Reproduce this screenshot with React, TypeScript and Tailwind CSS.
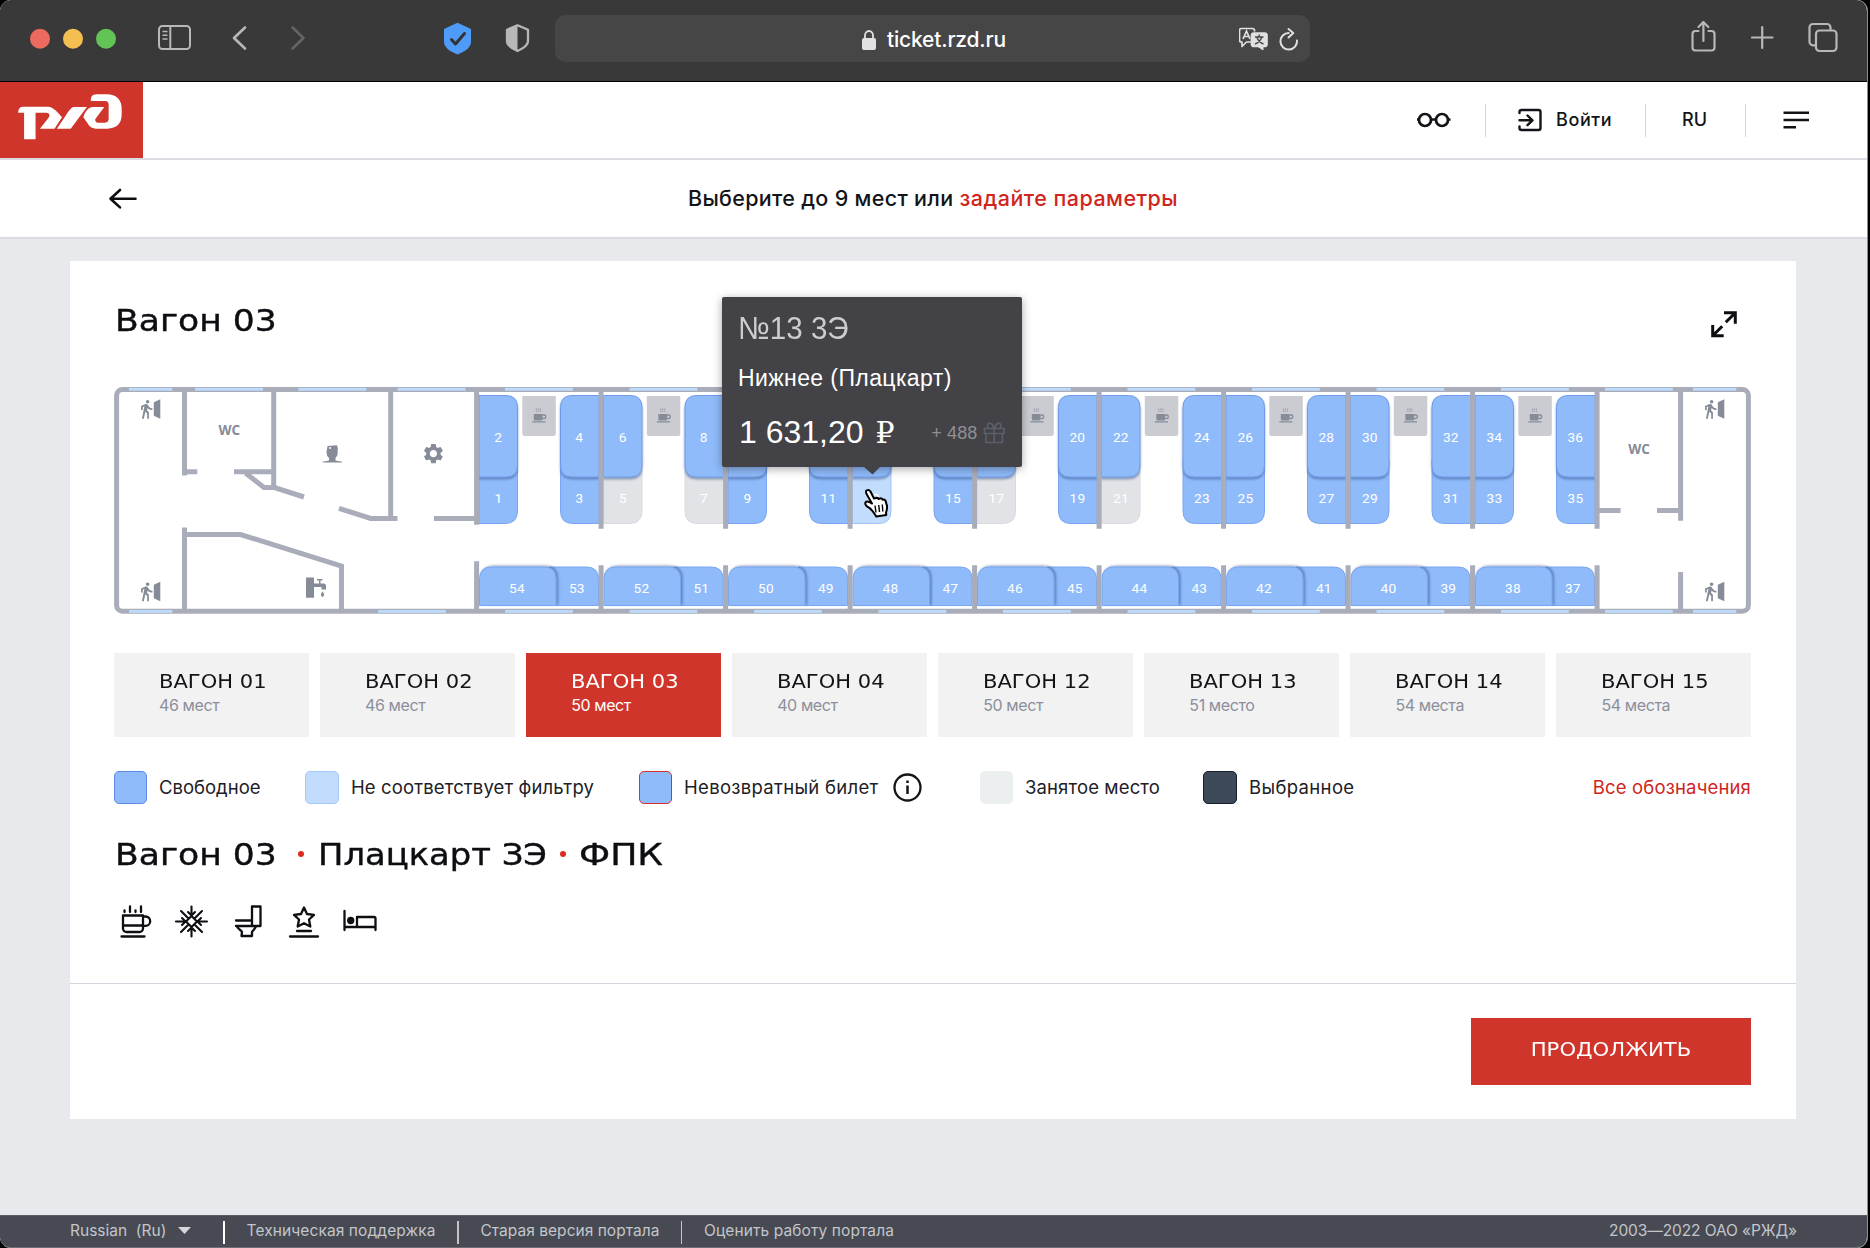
import React from "react";
import { MdSettings, MdDirectionsWalk } from "react-icons/md";

const WALL = "#a9adb9";
const GLASS = "#bedbfb";
const GLYPH = "#868b98";
const FREE = "#8fbbfa";
const PITCH = 124.5;

const compartments = [0, 1, 2, 3, 4, 5, 6, 7, 8];
const occupied = [5, 7, 17, 21];
const hovered = 13;
// Upper berths whose labels lie beneath the open seat tooltip.
const covered = [10, 12, 14, 16, 18];

const wagons = [
  { name: "ВАГОН 01", seats: "46 мест" },
  { name: "ВАГОН 02", seats: "46 мест" },
  { name: "ВАГОН 03", seats: "50 мест", active: true },
  { name: "ВАГОН 04", seats: "40 мест" },
  { name: "ВАГОН 12", seats: "50 мест" },
  { name: "ВАГОН 13", seats: "51 место" },
  { name: "ВАГОН 14", seats: "54 места" },
  { name: "ВАГОН 15", seats: "54 места" },
];

function BrowserBar() {
  return (
    <div className="flex h-[82px] w-full shrink-0 items-start rounded-t-[10px] border-b border-black bg-[#393939]">
      <svg className="ml-[29px]" width="88" height="81" viewBox="29 0 88 81">
        <circle cx="40" cy="38.7" r="10" fill="#ec6a5f" />
        <circle cx="73" cy="38.7" r="10" fill="#f4bf50" />
        <circle cx="106" cy="38.7" r="10" fill="#61c455" />
      </svg>
      <svg className="ml-[40px]" width="38" height="81" viewBox="157 0 38 81" fill="none" stroke="#b8b8b8" strokeWidth="2">
        <rect x="159" y="26" width="31" height="23" rx="3.5" />
        <path d="M170.3 26v23" />
        <path d="M162.5 31.5h5M162.5 35.2h5M162.5 39h5" strokeWidth="1.6" />
      </svg>
      <svg className="ml-[35px]" width="80" height="81" viewBox="230 0 80 81" fill="none" strokeWidth="2.6" strokeLinecap="round" strokeLinejoin="round">
        <path d="M245 27.5L234 38l11 10.5" stroke="#b8b8b8" />
        <path d="M292.5 27.5L303.5 38l-11 10.5" stroke="#646464" />
      </svg>
      <svg className="ml-[130px]" width="94" height="81" viewBox="440 0 94 81">
        <path d="M457.5 22.800L471 29v13c0 5.500-6 9.500-13.500 12.500C450 51.500 444 47.500 444 42V29z" fill="#4f9bf8" />
        <path d="M451.5 39.500l4 4.500 9-10.500" fill="none" stroke="#333" strokeWidth="3" strokeLinecap="round" strokeLinejoin="round" />
        <path d="M517.5 25.300l10.500 4.500v11.500c0 4-4.500 7-10.500 9.700-6-2.700-10.500-5.700-10.500-9.700V29.800z" fill="none" stroke="#b8b8b8" strokeWidth="2.300" strokeLinejoin="round" />
        <path d="M517.5 25v26c-6-2.700-10.500-5.700-10.500-9.700V29.800z" fill="#b8b8b8" />
      </svg>
      <div className="mt-[15px] ml-[21px] flex h-[47px] w-[755px] items-center rounded-[10px] bg-[#464646]">
        <svg className="ml-[306px]" width="16" height="24" viewBox="861 27 16 24">
          <rect x="862" y="38" width="14" height="12" rx="2" fill="#e2e2e2" />
          <path d="M865 39v-3.500a4 4.500 0 0 1 8 0V39" fill="none" stroke="#e2e2e2" strokeWidth="1.800" />
        </svg>
        <span className="ml-[10px] w-[352px] pt-[2px] font-['Inter'] text-[21px] leading-none font-medium tracking-[-0.18px] text-white">ticket.rzd.ru</span>
        <svg width="64" height="30" viewBox="1240 24.500 64 30" fill="none" stroke="#e0e0e0" strokeWidth="1.700">
          <path d="M1252 42.500h-4.500l-4.500 4.500v-4.500h-.5a2 2 0 0 1-2-2v-9.500a2 2 0 0 1 2-2h11a2 2 0 0 1 2 2v1" strokeLinejoin="round" />
          <path d="M1244 39.500l3.500-8 3.500 8M1245.300 37h4.500" />
          <rect x="1252.500" y="33.500" width="15.500" height="13.500" rx="2.500" fill="#e0e0e0" />
          <path d="M1259 47l5 3.500V46z" fill="#e0e0e0" strokeWidth="1" />
          <path d="M1256 37.500h8.500M1260.200 35v2.500M1262.500 38c-1 3.500-3.500 5.500-6.500 6.500M1258 38c1 3 3.500 5.500 6.500 6.500" stroke="#464646" strokeWidth="1.400" />
          <path d="M1298 41a8.300 8.300 0 1 1-8.300-7.500" strokeWidth="2" strokeLinecap="round" />
          <path d="M1289.500 29.500l4.800 4-4.800 4.500" strokeWidth="2" strokeLinecap="round" strokeLinejoin="round" />
        </svg>
      </div>
      <svg className="ml-[378px]" width="154" height="81" viewBox="1688 0 154 81" fill="none" stroke="#b8b8b8" strokeWidth="2.200" strokeLinecap="round" strokeLinejoin="round">
        <path d="M1698.500 31h-3a3 3 0 0 0-3 3v13.500a3 3 0 0 0 3 3h16a3 3 0 0 0 3-3v-13.500a3 3 0 0 0-3-3h-3" />
        <path d="M1703.400 41V22.500M1698.500 27l4.900-5 4.900 5" />
        <path d="M1752 37.500h20.500M1762.200 27v21" />
        <path d="M1815 45.300h-2a3.500 3.500 0 0 1-3.500-3.500V27.500a3.500 3.500 0 0 1 3.500-3.500h14a3.500 3.500 0 0 1 3.500 3.500v2.500" />
        <rect x="1816" y="30.500" width="20.500" height="20.500" rx="3.500" />
      </svg>
    </div>
  );
}

function SiteHeader() {
  return (
    <div className="flex h-[78px] w-full shrink-0 border-b-2 border-[#dbdce2] bg-white">
      <svg width="143" height="76" viewBox="0 246 362 228" preserveAspectRatio="none">
        <rect x="0" y="246" width="362" height="228" fill="#cf352b" />
        <g fill="#fff">
          <path d="M46 338Q46 321 57 320H123Q136 321 157 352L138 386H101L123 353Q129 339 118 338H90V418H61V338Z" />
          <path d="M186 321H220L179 386H144L167 346Q178 323 186 321Z" />
          <path d="M230 303V296Q231 283 246 283H270Q308 284 308 328V345Q307 384 272 386H242Q232 386 225 376L211 352Q212 343 218 334Q225 322 233 321H264L241 358Q241 368 247 368H266Q275 367 275 357V314Q275 303 266 303Z" />
        </g>
      </svg>
      <div className="ml-auto flex h-[76px] items-center pr-[57px] font-['Inter'] text-[18px] font-medium text-[#121418]">
        <svg className="mr-[34px]" width="34" height="16" viewBox="1417 112 34 16" fill="none" stroke="#121418" strokeWidth="2.700">
          <circle cx="1425" cy="120" r="6" />
          <circle cx="1442" cy="120" r="6" />
          <path d="M1431 119.500h5M1417 119.500h2.500M1448 119.500h2.500" />
        </svg>
        <i className="h-[33px] w-px bg-[#d5d7dd]" />
        <svg className="mr-[13px] ml-[31px]" width="26" height="26" viewBox="1517 107 26 26" fill="none" stroke="#121418" strokeWidth="2.400" strokeLinecap="round" strokeLinejoin="round">
          <path d="M1519.500 113v-1a2 2 0 0 1 2-2h17a2 2 0 0 1 2 2v16a2 2 0 0 1-2 2h-17a2 2 0 0 1-2-2v-1.500" />
          <path d="M1519.500 120.300h12M1527.500 115.500l5 4.800-5 4.800" />
        </svg>
        <span className="w-[89px] pb-px tracking-[0.6px]">Войти</span>
        <i className="h-[33px] w-px bg-[#d5d7dd]" />
        <span className="ml-[36px] w-[63px] pb-px">RU</span>
        <i className="h-[33px] w-px bg-[#d5d7dd]" />
        <svg className="ml-[37px]" width="27" height="24" viewBox="1783 108 27 24" stroke="#121418" strokeWidth="2.600">
          <path d="M1783.500 112.700h25.500M1783.500 120h25.500M1783.500 127.300h12.500" />
        </svg>
      </div>
    </div>
  );
}

function SubHeader() {
  return (
    <div className="flex h-[79px] w-full shrink-0 items-center border-b-2 border-[#d9dce1] bg-white font-['Inter'] text-[21.5px] font-medium whitespace-nowrap">
      <svg className="mr-[550px] ml-[108px]" width="30" height="26" viewBox="108.500 186 30 26" fill="none" stroke="#0c0e12" strokeWidth="2.600" strokeLinecap="round" strokeLinejoin="round">
        <path d="M111 198.700h25M120.500 190l-9.500 8.700 9.500 8.700" />
      </svg>
      <span className="w-[271.5px] pb-px tracking-[0.31px] text-[#121418]">Выберите до 9 мест или</span>
      <span className="pb-px tracking-[0.47px] text-[#d0251c]">задайте параметры</span>
    </div>
  );
}

function Exit({ x, y }: { x: number; y: number }) {
  return (
    <g fill={GLYPH}>
      <MdDirectionsWalk x={x - 5.5} y={y - 0.8} width="21" height="21" size={21} color={GLYPH} />
      <path d={`M${x + 12.5} ${y + 2.7}l6.500-3v19.500l-6.500-3z`} />
    </g>
  );
}

function seatColors(n: number) {
  if (occupied.includes(n)) return { fill: "#e1e3e7", stroke: "#d8dade" };
  if (n === hovered) return { fill: "#c2dcfd", stroke: "#9fc3f8" };
  return { fill: FREE, stroke: "#7aa5f0" };
}

function Compartment({ k }: { k: number }) {
  const x = 479 + PITCH * k;
  const n = 4 * k;
  const side = 54 - 2 * k;
  return (
    <g strokeWidth="1">
      <path d={`M${x} 460h38.500v51q0 12.500-12.500 12.500h-26z`} {...seatColors(n + 1)} />
      <path d={`M${x + 120} 460h-38.500v51q0 12.500 12.500 12.500h26z`} {...seatColors(n + 3)} />
      <path d={`M${x} 395.500h27q11.500 0 11.500 12v58q0 11.500-11.500 11.500h-27z`} fill={FREE} stroke="#6f9bea" filter="url(#berth)" />
      <path d={`M${x + 120} 395.500h-27q-11.500 0-11.500 12v58q0 11.500 11.500 11.500h27z`} fill={FREE} stroke="#6f9bea" filter="url(#berth)" />
      <path d={`M${x + 43.3} 396h33.500v37.500q0 2.500-2.500 2.500h-28.500q-2.500 0-2.500-2.500z`} fill="#cbccd1" />
      <g transform={`translate(${x + 53.3} 408)`}>
        <path d="M1.500 6h8.800v5q0 1.500-1.500 1.500H3q-1.500 0-1.500-1.500zM0 13.300h13.200v1.200H0z" fill={GLYPH} />
        <path d="M10.300 7h1.700q1.500 0 1.500 1.700t-1.500 1.800h-1.700" fill="none" stroke={GLYPH} strokeWidth="1.300" />
        <path d="M4 .5v3.500M6 .5v3.500M8 .5v3.500" stroke={GLYPH} strokeWidth=".8" strokeDasharray="1.500 .7" />
      </g>
      <path d={`M${x + 70} 567h37.500q12 0 12 12v26.500h-49.500z`} fill={FREE} stroke="#7aa5f0" />
      <path d={`M${x + 0.5} 605.500v-26.500q0-12 12-12h52.500q12 0 12 12v26.500z`} fill={FREE} stroke="#7aa5f0" filter="url(#side)" />
      <g fill="#fff" stroke="none" fontSize="13.700" textAnchor="middle" fontFamily="Roboto, sans-serif" letterSpacing=".2">
        {!covered.includes(n + 2) && <text x={x + 19.3} y="441.700">{n + 2}</text>}
        <text x={x + 19.5} y="502.700">{n + 1}</text>
        {!covered.includes(n + 4) && <text x={x + 100.3} y="441.700">{n + 4}</text>}
        <text x={x + 100.5} y="502.700">{n + 3}</text>
        <text x={x + 38} y="592.700">{side}</text>
        <text x={x + 97.8} y="592.700">{side - 1}</text>
      </g>
    </g>
  );
}

function Pane({ x, w, y }: { x: number; w: number; y: number }) {
  return <rect x={x} y={y} width={w} height="2.800" fill={GLASS} />;
}

function CarPlan() {
  return (
    <svg className="block shrink-0" width="1637" height="227" viewBox="114 387 1637 227">
      <defs>
        <filter id="berth" x="-20%" y="-20%" width="140%" height="140%">
          <feDropShadow dx="0" dy="2" stdDeviation="1.300" floodColor="#2f4d86" floodOpacity=".5" />
        </filter>
        <filter id="side" x="-20%" y="-20%" width="140%" height="140%">
          <feDropShadow dx="1.800" dy="-1" stdDeviation="1.200" floodColor="#2f4d86" floodOpacity=".5" />
        </filter>
      </defs>
      <rect x="116.600" y="389.600" width="1631.800" height="221.600" rx="6" fill="none" stroke={WALL} strokeWidth="5" />
      {[387.9, 610].map((y) => (
        <g key={y}>
          <Pane x={129} w={43.3} y={y} />
          <Pane x={1605} w={67.8} y={y} />
          <Pane x={1693} w={43.3} y={y} />
          {compartments.map((k) => (
            <Pane key={k} x={505 + PITCH * k} w={67.8} y={y} />
          ))}
        </g>
      ))}
      <Pane x={195} w={68} y={387.9} />
      <Pane x={298.3} w={68} y={387.9} />
      <Pane x={397.7} w={67.8} y={387.9} />
      <Pane x={378} w={68} y={610} />

      <g fill="none" stroke={WALL} strokeWidth="5">
        <path d="M184.500 392v83.500M184.500 471.800h12.800" />
        <path d="M234 471.800h40M273.700 392v96" />
        <path d="M245.500 473l18.500 14.500h10.500l29.500 9.500" />
        <path d="M390.700 392v126M339 508.300l31.700 10.100h26.800M434 518.400h43" />
        <path d="M184.500 527.500v83M187 534.500h53.500l101 31.500v44" />
        <path d="M1596 510.500h24.600M1657 510.500h24M1680.600 392v128.700M1680.600 572v38" />
      </g>
      {compartments.map((k) => (
        <Compartment key={k} k={k} />
      ))}
      <g fill="none" stroke={WALL} strokeWidth="5">
        <path d="M476.600 392v132.700M476.600 561.300v49" />
        {compartments.map((k) => (
          <path key={k} d={`M${601.1 + PITCH * k} 392v136.800M${601.1 + PITCH * k} 565.300v45`} />
        ))}
      </g>

      <Exit x={141.3} y={399.5} />
      <Exit x={141.3} y={582} />
      <Exit x={1705.3} y={399.5} />
      <Exit x={1705.3} y={582} />
      <g fill={GLYPH} fontFamily="Open Sans, sans-serif" fontWeight="700" fontSize="13.500" textAnchor="middle">
        <text x="229.300" y="435.300">WC</text>
        <text x="1639" y="454.300">WC</text>
      </g>
      <MdSettings x={421.4} y={441.7} width="24" height="24" size={24} color={GLYPH} />
      <path d="M327.500 446l9.500-.8.800 2.800-.3 7-2 3v2.500l6.500 1.300v.7h-19.500v-.7l6.500-1.300v-2.500q-2.500-2-2.500-6z" fill={GLYPH} />
      <circle cx="330" cy="448" r="1" fill="#fff" />
      <g fill={GLYPH}>
        <path d="M306 577.500h8v20.300h-8zM314 583.500h9.500q2.500 0 2.500 2.500v3.500h-4.500v-2.500H314zM317 579h5.500v1.500H317zM319 579h1.500v5H319z" />
        <path d="M322.500 591.500q3.300 3.500 0 5.500-3.300-2 0-5.500z" />
      </g>
    </svg>
  );
}

function SeatTooltip() {
  return (
    <div className="absolute top-[297px] left-[722px] h-[170px] w-[299.5px] rounded-[2px] bg-[#424247] font-['Liberation_Sans'] shadow-[0_2px_10px_rgba(0,0,0,0.35)]">
      <div className="mt-[14px] ml-[16px] h-[34px] origin-left scale-x-[0.925] text-[32px] leading-[34px] whitespace-nowrap text-[#cdcdce]">№13 3Э</div>
      <div className="mt-[20px] ml-[16px] h-[26px] text-[23px] leading-[26px] tracking-[0.4px] whitespace-nowrap text-white">Нижнее (Плацкарт)</div>
      <div className="mt-[22px] ml-[17px] flex h-[38px] items-center text-[32px] whitespace-nowrap text-white">
        <span>1 631,20</span>
        <span className="ml-[12px] w-[21px] origin-left font-['DejaVu_Serif'] text-[30px] font-normal">₽</span>
        <span className="ml-auto pt-[2px] text-[18px] tracking-[0.15px] text-[#8f9094]">+ 488</span>
        <svg className="mt-[2px] mr-[17px] ml-[5px]" width="22" height="22" viewBox="982 423 22 22" fill="none" stroke="#5b5f6a" strokeWidth="1.700" strokeLinejoin="round">
          <path d="M983.500 429.500h19.500v5h-19.500zM985 434.500h16.500v9h-16.500zM993.200 429.500v14M993.200 429.500c-1.500-5-4-6-5.700-5s-1.300 4 0 5M993.200 429.500c1.500-5 4-6 5.700-5s1.300 4 0 5" />
        </svg>
      </div>
      <svg className="absolute top-[170px] left-[142px]" width="16" height="8" viewBox="0 0 16 8">
        <path d="M0 0h16L8.500 7.500z" fill="#424247" />
      </svg>
      <svg className="absolute top-[190px] left-[139px]" width="30" height="34" viewBox="0 0 30 34">
        <path d="M5.500 3.500q2.300-1.500 4 1l3.500 7 2-.5q1.800-.5 2.700 1l1.300-.6q1.800-.3 2.500 1.300l1-.3q1.800 0 2.200 2l1.300 4.500q.3 3-1 7l.3 2-10 1.500q-3.500-6-7-8.500-5-3-3.800-5.500 1.500-1.800 5 .3l1.500.8-5.500-9.500q-1-2.500 0-3.500z" fill="#fff" stroke="#000" strokeWidth="2" strokeLinejoin="round" />
        <path d="M14 18.500l1 7M17.700 18l.8 7M21.300 17.500l.5 7" stroke="#000" strokeWidth="1.400" />
      </svg>
    </div>
  );
}

function WagonTabs() {
  return (
    <div className="mt-[39px] grid shrink-0 grid-cols-8 gap-[11.5px]">
      {wagons.map((w) => (
        <div key={w.name} className={w.active ? "h-[84px] bg-[#cf352b] pt-[18px] pl-[45px] text-white" : "h-[84px] bg-[#f2f2f2] pt-[18px] pl-[45px] text-[#121418]"}>
          <div className="h-[22px] origin-left scale-x-[1.08] font-['DejaVu_Sans'] text-[19.5px] leading-[22px] whitespace-nowrap">{w.name}</div>
          <div className={w.active ? "mt-[2px] h-[20px] font-['Inter'] text-[16px] leading-[20px] tracking-[-0.4px] text-white" : "mt-[2px] h-[20px] font-['Inter'] text-[16px] leading-[20px] tracking-[-0.4px] text-[#8b8f9b]"}>{w.seats}</div>
        </div>
      ))}
    </div>
  );
}

function Legend() {
  return (
    <div className="mt-[33px] flex h-[34px] shrink-0 items-center font-['Inter'] text-[18.5px] whitespace-nowrap text-[#1d2026]">
      <i className="h-[33px] w-[33px] rounded-[5px] border border-[#5c8ae6] bg-[#8fbbfa]" />
      <span className="ml-[12px] w-[146px] pt-px">Свободное</span>
      <i className="h-[33px] w-[34px] rounded-[5px] border border-[#a3c8fb] bg-[#c2dcfd]" />
      <span className="ml-[12px] w-[288px] pt-px tracking-[0.12px]">Не соответствует фильтру</span>
      <i className="h-[33px] w-[33px] rounded-[5px] border border-[#d9302c] bg-[#8fbbfa]" />
      <span className="ml-[12px] w-[209px] pt-px tracking-[0.3px]">Невозвратный билет</span>
      <svg width="29" height="29" viewBox="0 0 29 29" fill="none" stroke="#121418" strokeWidth="2.300">
        <circle cx="14.500" cy="14.500" r="13" />
        <path d="M14.500 12.500v8.500M14.500 7.500v2.600" strokeWidth="2.500" />
      </svg>
      <i className="ml-[58px] h-[33px] w-[33px] rounded-[5px] bg-[#ebeff0]" />
      <span className="ml-[12px] w-[178px] pt-px tracking-[0.12px]">Занятое место</span>
      <i className="h-[33px] w-[34px] rounded-[5px] border border-[#16202f] bg-[#3d4958]" />
      <span className="ml-[12px] pt-px tracking-[0.35px]">Выбранное</span>
      <span className="ml-auto pt-px tracking-[0.15px] text-[#d0251c]">Все обозначения</span>
    </div>
  );
}

function Amenities() {
  return (
    <svg className="mt-[25px] shrink-0" width="270" height="38" viewBox="114 903 270 38" fill="none" stroke="#0d0f13" strokeWidth="2.300" strokeLinecap="round" strokeLinejoin="round">
      <path d="M123 916.500h20v13a3.500 3.500 0 0 1-3.500 3.500h-13a3.500 3.500 0 0 1-3.500-3.500zM123 926.500h20M143 917.500h2.500a4.700 4.700 0 0 1 0 9.400H143M121.500 937.500h23M124.500 911.500v1.500M130 907.500v5.500M135.500 911.500v1.500M141 907.500v5.500" />
      <path d="M191.500 907.500v9.500M191.500 928v9.500M176 922.500h10M197 922.500h10M181 912l7.500 7.500M202 912l-7.500 7.500M181 933l7.500-7.500M202 933l-7.500-7.500M188 913l3.500 3.500 3.500-3.500M188 932l3.500-3.500 3.500 3.500M182 919l3.500 3.500-3.500 3.500M201 919l-3.500 3.500 3.500 3.500M191.500 917l-5.500 5.500 5.500 5.500 5.500-5.500z" strokeWidth="2.100" />
      <path d="M252 907.500h8.500v19.500H252zM236 921.500h16M236 927h16.500M237 927c0 3 4.500 4 5 6l-.5 4h10.500v-4c1-2 3.500-3 4-6" />
      <path d="M304 908.500l3 6.500 7 .8-5 4.700 1.300 7-6.300-3.300-6.300 3.300 1.300-7-5-4.700 7-.8zM297 932h14M290 937.500h28" />
      <path d="M344.500 912v19M344.500 928h31M375.500 931v-11.500a1.500 1.500 0 0 0-1.500-1.500h-17v10" />
      <circle cx="350.700" cy="921.500" r="2.500" fill="#0d0f13" />
    </svg>
  );
}

function Footer() {
  return (
    <div className="flex h-[33px] w-full shrink-0 items-center overflow-hidden rounded-b-[10px] border-t border-b border-t-[#5c5e66] border-b-[#6d6f76] bg-[#474a53] pr-[70px] pb-px pl-[70px] font-['Inter'] text-[15.5px] whitespace-nowrap text-[#c3c5ca]">
      <span className="w-[108px] whitespace-pre">Russian  (Ru)</span>
      <svg width="13" height="8" viewBox="0 0 13 8"><path d="M0 0h13L6.500 7z" fill="#d5d6d9" /></svg>
      <i className="mt-[3px] ml-[32px] h-[23px] w-[1.5px] bg-white" />
      <span className="ml-[22px] w-[210.5px] tracking-[0.1px]">Техническая поддержка</span>
      <i className="mt-[3px] h-[23px] w-[1.5px] bg-[#c3c5ca]" />
      <span className="ml-[22px] w-[200px] tracking-[0.03px]">Старая версия портала</span>
      <i className="mt-[3px] h-[23px] w-[1.5px] bg-[#c3c5ca]" />
      <span className="ml-[22px] tracking-[0.1px]">Оценить работу портала</span>
      <span className="ml-auto tracking-[-0.1px]">2003—2022 ОАО «РЖД»</span>
    </div>
  );
}

export default function App() {
  return (
    <div className="relative h-[1248px] w-[1870px] overflow-hidden bg-black">
      <div className="flex h-[1248px] w-[1868px] flex-col overflow-hidden rounded-[11px] border-r border-[#8c8d90] bg-[#e8e9ed]">
        <BrowserBar />
        <SiteHeader />
        <SubHeader />
        <div className="mt-[22px] ml-[70px] h-[858px] w-[1726px] shrink-0 bg-white">
          <div className="flex h-[723px] flex-col border-b border-[#d3d5dc] pr-[45px] pl-[44px]">
            <div className="flex h-[126px] shrink-0 items-start justify-between">
              <h1 className="mt-[39px] ml-px origin-left scale-x-[1.115] font-['DejaVu_Sans'] text-[31px] leading-[40px] text-[#0c0e12] [-webkit-text-stroke:0.4px_#0c0e12]">Вагон 03</h1>
              <svg className="mt-[48px] mr-[12px]" width="30" height="30" viewBox="1709 309 30 30" fill="none" stroke="#0c0e12" strokeWidth="3">
                <path d="M1724 312.800h11.300v11M1734.800 313.300l-9 9M1712.700 325v10.700h11M1713.200 335.200l9-9" />
              </svg>
            </div>
            <CarPlan />
            <WagonTabs />
            <Legend />
            <div className="mt-[27px] ml-px flex h-[46px] shrink-0 items-center font-['DejaVu_Sans'] text-[31px] whitespace-nowrap text-[#0c0e12] [-webkit-text-stroke:0.4px_#0c0e12]">
              <span className="w-[183px] origin-left scale-x-[1.115]">Вагон 03</span>
              <i className="h-[6px] w-[6px] rounded-full bg-[#dc2b22]" />
              <span className="ml-[14px] w-[242px] origin-left scale-x-[1.09]">Плацкарт ЗЭ</span>
              <i className="h-[6px] w-[6px] rounded-full bg-[#dc2b22]" />
              <span className="ml-[13px] origin-left scale-x-[1.167]">ФПК</span>
            </div>
            <Amenities />
          </div>
          <div className="flex h-[135px] items-center justify-end pr-[45px]">
            <button className="h-[67px] w-[280px] bg-[#cf352b] pb-[3px] font-['DejaVu_Sans'] text-[19.5px] text-white">
              <span className="inline-block scale-x-[1.085]">ПРОДОЛЖИТЬ</span>
            </button>
          </div>
        </div>
        <div className="grow" />
        <Footer />
      </div>
      <SeatTooltip />
    </div>
  );
}
